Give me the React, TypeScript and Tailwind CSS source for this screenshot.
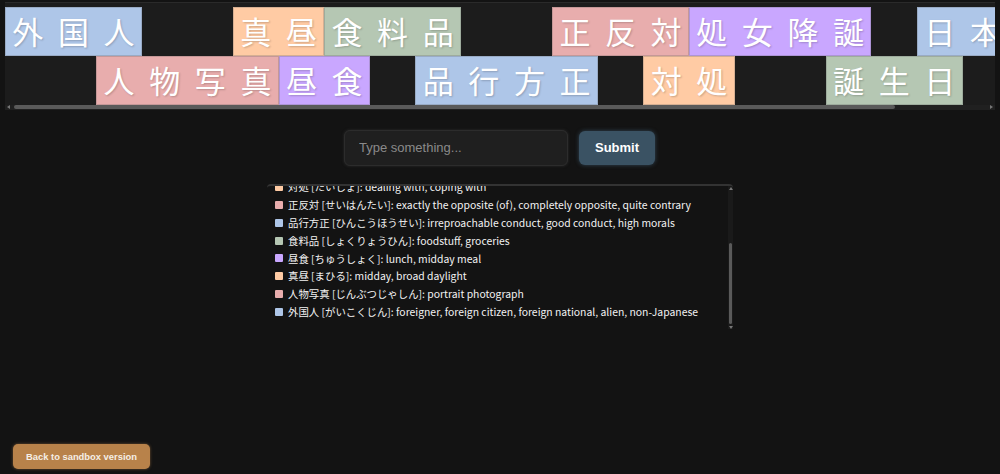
const blue = "bg-[#aec6e8]";
const peach = "bg-[#ffcba4]";
const sage = "bg-[#b5c7b3]";
const rose = "bg-[#e8adad]";
const violet = "bg-[#c9a7ff]";

type Tile = { text: string; color: string; skip?: number };

const row1: Tile[] = [
  { text: "外国人", color: blue },
  { text: "真昼", color: peach, skip: 2 },
  { text: "食料品", color: sage },
  { text: "正反対", color: rose, skip: 2 },
  { text: "処女降誕", color: violet },
  { text: "日本", color: blue, skip: 1 },
];
const row2: Tile[] = [
  { text: "人物写真", color: rose },
  { text: "昼食", color: violet },
  { text: "品行方正", color: blue, skip: 1 },
  { text: "対処", color: peach, skip: 1 },
  { text: "誕生日", color: sage, skip: 2 },
];

const list = [
  { c: peach, t: "対処 [たいしょ]: dealing with, coping with" },
  { c: rose, t: "正反対 [せいはんたい]: exactly the opposite (of), completely opposite, quite contrary" },
  { c: blue, t: "品行方正 [ひんこうほうせい]: irreproachable conduct, good conduct, high morals" },
  { c: sage, t: "食料品 [しょくりょうひん]: foodstuff, groceries" },
  { c: violet, t: "昼食 [ちゅうしょく]: lunch, midday meal" },
  { c: peach, t: "真昼 [まひる]: midday, broad daylight" },
  { c: rose, t: "人物写真 [じんぶつじゃしん]: portrait photograph" },
  { c: blue, t: "外国人 [がいこくじん]: foreigner, foreign citizen, foreign national, alien, non-Japanese" },
];

function Spacer({ n }: { n: number }) {
  return (
    <>
      {Array.from({ length: n }).map((_, i) => (
        <span key={i} className="w-[45.6px] shrink-0" />
      ))}
    </>
  );
}

function Row({ tiles, className }: { tiles: Tile[]; className?: string }) {
  return (
    <div className={`flex h-[48.8px] ${className ?? ""}`}>
      {tiles.map((tile) => (
        <div key={tile.text} className="flex shrink-0">
          <Spacer n={tile.skip ?? 0} />
          <div className={`flex shrink-0 shadow-[inset_0_0_0_1px_rgba(90,90,90,0.25)] ${tile.color}`}>
            {Array.from(tile.text).map((ch, i) => (
              <span
                key={i}
                className="w-[45.6px] text-center text-[31px] leading-[47px] font-normal text-white [text-shadow:1px_1px_2px_rgba(0,0,0,0.2)]"
              >
                {ch}
              </span>
            ))}
          </div>
        </div>
      ))}
    </div>
  );
}

export default function App() {
  return (
    <div className="relative h-[474px] w-[1000px] overflow-hidden bg-[#131313] font-['Noto_Sans_CJK_JP',sans-serif]">
      <div className="px-[5px] pt-[2px]">
        <div className="border-t border-[#2a2a2a] bg-[#1c1c1c] pt-[4px]">
          <div className="overflow-hidden">
            <Row tiles={row1} />
            <Row tiles={row2} className="pl-[91.3px]" />
          </div>
          <div className="flex h-[5px] items-center bg-[#202020]">
            <span className="mr-[4px] ml-[2px] h-0 w-0 border-y-[2px] border-r-[3px] border-y-transparent border-r-[#777]" />
            <div className="h-[4px] w-[881px] rounded-full bg-[#5a5a5a]" />
            <div className="flex-1" />
            <span className="mr-[2px] h-0 w-0 border-y-[2px] border-l-[3px] border-y-transparent border-l-[#777]" />
          </div>
        </div>
      </div>

      <div className="mt-[20px] flex justify-center gap-[11px] pr-[1px]">
        <div className="flex h-[36px] w-[224px] items-center rounded-[6px] border border-[#2c2c2c] bg-[#1f1f1f] pl-[14px] font-['Liberation_Sans',sans-serif] text-[13px] text-[#8a8a8a] shadow-[0_0_3px_rgba(70,70,70,0.5)]">
          <input
            placeholder="Type something..."
            className="w-full bg-transparent outline-none placeholder:text-[#8a8a8a]"
          />
        </div>
        <button className="mt-[1px] h-[34px] w-[76px] rounded-[6px] bg-[#3a5263] font-['Liberation_Sans',sans-serif] text-[13px] font-bold text-white shadow-[0_0_4px_rgba(80,120,150,0.5)]">
          Submit
        </button>
      </div>

      <div className="mx-auto mt-[18px] flex h-[145px] w-[466px] overflow-hidden rounded-t-[4px] border-t-2 border-[#333] pl-[8px]">
        <div className="min-w-0 flex-1 overflow-hidden">
          <ul className="-mt-[7.3px]">
            {list.map((item) => (
              <li key={item.t} className="flex h-[17.8px] items-center gap-[5px] text-[10.4px] whitespace-nowrap text-[#f2f2f2]">
                <span className={`h-[8px] w-[8px] shrink-0 rounded-[1px] ${item.c}`} />
                <span>{item.t}</span>
              </li>
            ))}
          </ul>
        </div>
        <div className="flex w-[5px] flex-col items-center bg-[#1a1a1a]">
          <span className="mt-[1px] h-0 w-0 border-x-[2px] border-b-[3px] border-x-transparent border-b-[#777]" />
          <div className="mt-[53px] h-[81px] w-[3px] rounded-full bg-[#5a5a5a]" />
          <span className="mt-[2px] h-0 w-0 border-x-[2px] border-t-[3px] border-x-transparent border-t-[#777]" />
        </div>
      </div>

      <button className="absolute bottom-[5px] left-[13px] h-[25px] w-[137px] rounded-[5px] bg-[#b8824a] pt-[1px] font-['Liberation_Sans',sans-serif] text-[9.4px] font-bold text-[#f5efe6] shadow-[0_0_3px_rgba(184,130,74,0.6)]">
        Back to sandbox version
      </button>
    </div>
  );
}
